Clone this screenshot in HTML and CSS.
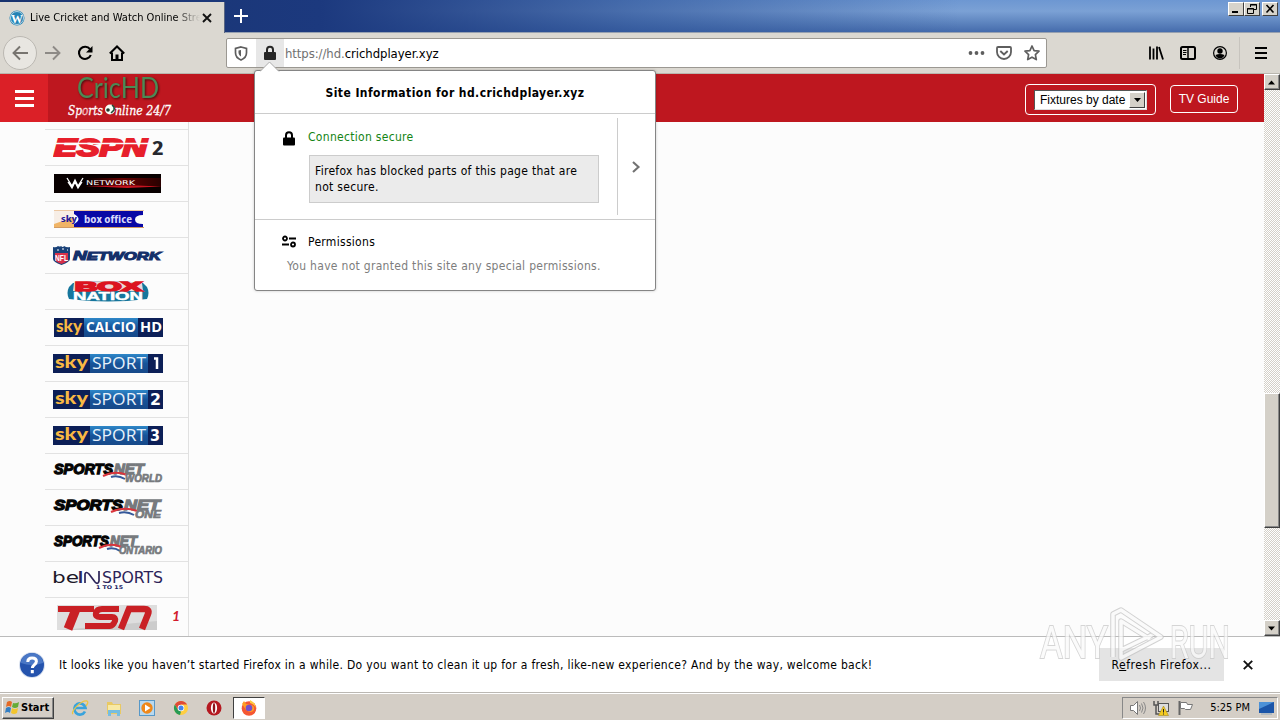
FILE: index.html
```
<!DOCTYPE html>
<html lang="en">
<head>
  <meta charset="UTF-8">
  <title>Live Cricket and Watch Online Streaming</title>
  <link rel="stylesheet" href="styles.css">
</head>
<body>

<div class="tabs">
  <div class="tab">
    <svg class="tab-icon" width="16" height="16" viewBox="0 0 16 16"><circle cx="8" cy="8" r="7.5" fill="#2483b5"/><circle cx="8" cy="8" r="6.5" fill="none" stroke="#d8e8ee" stroke-width=".8"/><text x="2" y="13" font-family="Liberation Serif" font-weight="bold" font-size="13" fill="#fff" textLength="12" lengthAdjust="spacingAndGlyphs">W</text></svg>
    <span class="tab-title">Live Cricket and Watch Online Stre</span>
    <svg class="tab-close" width="10" height="10" viewBox="0 0 10 10"><path d="M1 1l8 8M9 1L1 9" stroke="#111" stroke-width="1.9"/></svg>
  </div>
  <svg class="new-tab" width="14" height="14" viewBox="0 0 14 14"><path d="M7 0v14M0 7h14" stroke="#fff" stroke-width="2"/></svg>
  <div class="win-buttons">
    <span class="win-btn"><svg width="14" height="12"><path d="M3 9h6" stroke="#000" stroke-width="2"/></svg></span>
    <span class="win-btn"><svg width="14" height="12"><path d="M5.500 4V1.500h6v5H9M5 2h7M2.500 5.500h6v5h-6zM2 6h7" fill="none" stroke="#000"/></svg></span>
    <span class="win-btn close"><svg width="14" height="12"><path d="M3.500 2l7 7.500M10.500 2l-7 7.500" stroke="#000" stroke-width="1.600"/></svg></span>
  </div>
</div>

<div class="toolbar">
  <span class="back"><svg width="16" height="16" viewBox="0 0 16 16"><path d="M16 8H1.500M8 1.500L1.500 8 8 14.500" fill="none" stroke="#77746f" stroke-width="1.900"/></svg></span>
  <svg class="forward" width="16" height="16" viewBox="0 0 16 16"><path d="M0 8h14.500M8 1.500L14.500 8 8 14.500" fill="none" stroke="#8d8a86" stroke-width="1.900"/></svg>
  <svg class="reload" width="16" height="16" viewBox="0 0 16 16"><path d="M13 4.200A6.100 6.100 0 1 0 13.800 10" fill="none" stroke="#000" stroke-width="2.100"/><path d="M15.500 1v6.500H9z" fill="#000"/></svg>
  <svg class="home" width="16" height="16" viewBox="0 0 16 16"><path d="M.8 8.500L8 1.500l7.200 7" fill="none" stroke="#000" stroke-width="2"/><path d="M3 7.500V15h10V7.500" fill="none" stroke="#000" stroke-width="2"/><path d="M6.500 14V9.500h3V14z" fill="#000"/></svg>
  <div class="urlbar">
    <svg class="shield" width="14" height="15" viewBox="0 0 14 15"><path d="M7 1l5.500 1.500v4.300c0 3.500-2.500 6-5.500 7.200-3-1.200-5.500-3.700-5.500-7.200V2.500z" fill="none" stroke="#5e5e5e" stroke-width="1.700"/><path d="M7 4v6.500C5.300 9.500 4.500 8 4.500 6.500V4.600z" fill="#5e5e5e"/></svg>
    <span class="identity"><svg width="14" height="16" viewBox="0 0 14 16"><path d="M4 8V4.800a3 3 0 0 1 6 0V8" fill="none" stroke="#262626" stroke-width="2"/><rect x="1" y="7" width="12" height="8" rx="1" fill="#262626"/></svg></span>
    <span class="url">https://hd.<b>crichdplayer.xyz</b></span>
    <svg class="dots" width="17" height="6"><circle cx="2.500" cy="3" r="1.900" fill="#5e5e5e"/><circle cx="8.500" cy="3" r="1.900" fill="#5e5e5e"/><circle cx="14.500" cy="3" r="1.900" fill="#5e5e5e"/></svg>
    <svg class="pocket" width="16" height="16" viewBox="0 0 16 16"><path d="M2 2h12a1 1 0 0 1 1 1v4a7 7 0 0 1-14 0V3a1 1 0 0 1 1-1z" fill="none" stroke="#5e5e5e" stroke-width="1.800"/><path d="M4.300 6L8 9.500 11.700 6" fill="none" stroke="#5e5e5e" stroke-width="1.900"/></svg>
    <svg class="star" width="16" height="16" viewBox="0 0 16 16"><path d="M8 1l2.100 4.600 4.900.6-3.600 3.400.9 5L8 12.200l-4.300 2.400.9-5L1 6.200l4.900-.6z" fill="none" stroke="#5e5e5e" stroke-width="1.700" stroke-linejoin="round"/></svg>
  </div>
  <div class="tools">
    <svg width="16" height="16" viewBox="0 0 16 16"><path d="M2 1.500v13M5.500 3.500v11M9 1.500v13M11 2l4 12.500" fill="none" stroke="#000" stroke-width="1.800"/></svg>
    <svg width="16" height="16" viewBox="0 0 16 16"><rect x="1" y="2" width="14" height="12" rx="1.500" fill="none" stroke="#000" stroke-width="2"/><path d="M8 2v12" stroke="#000" stroke-width="1.500"/><path d="M3 5.500h3.500M3 7.500h3.500M3 9.500h3" stroke="#000"/></svg>
    <svg width="16" height="16" viewBox="0 0 16 16"><circle cx="8" cy="8" r="6.400" fill="none" stroke="#000" stroke-width="1.200"/><circle cx="8" cy="6" r="2.700" fill="#000"/><path d="M3.500 10q4.500-2 9 0-1.300 3.300-4.500 3.400Q4.800 13.300 3.500 10z" fill="#000"/></svg>
    <span class="divider"></span>
    <svg width="12" height="14"><path d="M0 2h12M0 7h12M0 12h12" stroke="#000" stroke-width="2"/></svg>
  </div>
</div>

<div class="content">
  <div class="page">
    <div class="header">
      <div class="menu"><svg width="19" height="17"><path d="M0 1.500h19M0 8.500h19M0 15.500h19" stroke="#fff" stroke-width="3"/></svg></div>
      <svg class="logo" width="120" height="46" viewBox="0 0 120 46">
        <text x="19" y="24" font-family="Lato" font-size="28" fill="#4c8a55" textLength="82" lengthAdjust="spacingAndGlyphs">CricHD</text>
        <g class="tagline"><text x="10" y="41" textLength="35" lengthAdjust="spacingAndGlyphs">Sp<tspan fill="#e98590">o</tspan>rts</text><text x="57" y="41" textLength="56" lengthAdjust="spacingAndGlyphs">nline 24/7</text></g>
        <circle cx="52" cy="35.500" r="5" fill="#f5fff7"/><circle cx="50" cy="36" r="1.800" fill="#213b2a"/><path d="M54 31q3 2 2 5l-3 3" fill="none" stroke="#1b4a37" stroke-width="1.500"/>
      </svg>
      <div class="header-right">
        <div class="fixtures"><div class="select"><span>Fixtures by date</span><i><svg width="9" height="5"><path d="M1 0h7L4.500 4z"/></svg></i></div></div>
        <div class="guide">TV Guide</div>
      </div>
    </div>
    <div class="sidebar">
      <div class="channel"><svg width="120" height="30">
        <text x="1" y="23" font-family="Liberation Sans" font-weight="bold" font-style="italic" font-size="24" fill="#e71f2b" stroke="#e71f2b" stroke-width="2" textLength="93" lengthAdjust="spacingAndGlyphs">ESPN</text><path d="M3 10.500h93" stroke="#fcfcfc" stroke-width="1.300"/>
        <text x="99" y="22" font-family="Open Sans" font-weight="bold" font-size="19" fill="#26282e" textLength="12" lengthAdjust="spacingAndGlyphs">2</text>
      </svg></div>
      <div class="channel"><svg width="120" height="30">
        <defs><linearGradient id="wwe" x2="1"><stop stop-color="#000"/><stop offset=".5" stop-color="#600"/><stop offset="1" stop-color="#280000"/></linearGradient></defs>
        <rect x="1" y="5" width="107" height="19" fill="#080000"/><path d="M30 9h78v9H36z" fill="url(#wwe)"/><path d="M32 17l52-.5 24 1-34 1.500z" fill="#c61320"/>
        <path d="M14 9l5 8 3-6 3 6 5-8M15 13l4 6 3-6 3 6 4-6" fill="none" stroke="#fff" stroke-width="1.300"/>
        <text x="33" y="16" font-family="DejaVu Sans" font-size="6.500" fill="#fff" textLength="49" lengthAdjust="spacingAndGlyphs">NETWORK</text>
      </svg></div>
      <div class="channel"><svg width="120" height="30">
        <path d="M1 5h20v18H1z" fill="#f7eee6"/><path d="M1 23V19l20-7v11z" fill="#f0b466"/><path d="M1 5h90v1H1z" fill="#ecc8a3"/>
        <path d="M21 6h69v4q-8 0-8 4.500t8 4.500v3H21v-3q9-5 0-10z" fill="#0908a5"/>
        <text x="8" y="17" font-family="Open Sans" font-weight="bold" font-size="9" fill="#26209c" textLength="16" lengthAdjust="spacingAndGlyphs">sky</text>
        <text x="31" y="18" font-family="Open Sans" font-weight="bold" font-size="11" fill="#d6d7fa" textLength="48" lengthAdjust="spacingAndGlyphs">box office</text>
        <path d="M1 22.500h90" stroke="#d29b63"/>
      </svg></div>
      <div class="channel"><svg width="120" height="30">
        <path d="M0 6q3 1 5-1 2 1 3 0 2 2 3 0 3 2 6 1v12q0 3-8.500 6Q0 21 0 18z" fill="#194178"/><path d="M2 12h13v7q-1 2-6.500 4Q3 21 2 19z" fill="#d8304b"/>
        <text x="2" y="20" font-family="Liberation Sans" font-weight="bold" font-size="9" fill="#fff" textLength="13" lengthAdjust="spacingAndGlyphs">NFL</text><path d="M4 9h2m3-1h2m3 1h1" stroke="#fff"/>
        <text x="20" y="19" font-family="Liberation Sans" font-weight="bold" font-style="italic" font-size="12" fill="#14306a" stroke="#14306a" stroke-width="1" textLength="88" lengthAdjust="spacingAndGlyphs">N<tspan font-size="10.500">ETWORK</tspan></text>
      </svg></div>
      <div class="channel"><svg width="120" height="30">
        <path d="M20 6q35-4 70 0l4 4q3 6 0 12-39 5-78 0-3-6 0-12z" fill="#16769c"/><path d="M21 6q34-4 68 0l1 8H20z" fill="#ead8da"/>
        <text x="22" y="14" font-family="Liberation Sans" font-weight="bold" font-size="12" fill="#dc1420" stroke="#dc1420" stroke-width="1.500" textLength="67" lengthAdjust="spacingAndGlyphs">BOX</text>
        <text x="20" y="23" font-family="Liberation Sans" font-weight="bold" font-size="10" fill="#fff" stroke="#fff" stroke-width=".4" textLength="70" lengthAdjust="spacingAndGlyphs">NATION</text>
      </svg></div>
      <div class="channel"><svg class="sky" width="120" height="30">
        <defs><linearGradient id="blue" x2="0" y2="1"><stop stop-color="#2e87c8"/><stop offset=".5" stop-color="#17549a"/><stop offset="1" stop-color="#174989"/></linearGradient></defs>
        <rect x="1" y="5" width="109" height="19" fill="#0c1f57"/><rect x="31" y="5" width="54" height="19" fill="url(#blue)"/>
        <text class="sky-name" x="3" y="19" textLength="26" lengthAdjust="spacingAndGlyphs">sky</text><text class="sky-label" x="33" y="19" textLength="50" lengthAdjust="spacingAndGlyphs">CALCIO</text><text class="sky-label" x="87" y="19" textLength="22" lengthAdjust="spacingAndGlyphs">HD</text>
      </svg></div>
      <div class="channel"><svg class="sky" width="120" height="30">
        <rect x="0" y="5" width="110" height="19" fill="#0c1f57"/><rect x="37" y="5" width="58" height="19" fill="url(#blue)"/>
        <text class="sky-name" x="2" y="19" textLength="33" lengthAdjust="spacingAndGlyphs">sky</text><text class="sky-thin" x="39" y="20" textLength="54" lengthAdjust="spacingAndGlyphs">SPORT</text><path d="M101 9.500h3V20" fill="none" stroke="#fff" stroke-width="2.500"/>
      </svg></div>
      <div class="channel"><svg class="sky" width="120" height="30">
        <rect x="0" y="5" width="110" height="19" fill="#0c1f57"/><rect x="37" y="5" width="58" height="19" fill="url(#blue)"/>
        <text class="sky-name" x="2" y="19" textLength="33" lengthAdjust="spacingAndGlyphs">sky</text><text class="sky-thin" x="39" y="20" textLength="54" lengthAdjust="spacingAndGlyphs">SPORT</text><text class="sky-num" x="97" y="20" textLength="11" lengthAdjust="spacingAndGlyphs">2</text>
      </svg></div>
      <div class="channel"><svg class="sky" width="120" height="30">
        <rect x="0" y="5" width="110" height="19" fill="#0c1f57"/><rect x="37" y="5" width="58" height="19" fill="url(#blue)"/>
        <text class="sky-name" x="2" y="19" textLength="33" lengthAdjust="spacingAndGlyphs">sky</text><text class="sky-thin" x="39" y="20" textLength="54" lengthAdjust="spacingAndGlyphs">SPORT</text><text class="sky-num" x="97" y="20" textLength="10" lengthAdjust="spacingAndGlyphs">3</text>
      </svg></div>
      <div class="channel"><svg class="sn" width="120" height="30">
        <text class="sn-a" x="1" y="17" textLength="59" lengthAdjust="spacingAndGlyphs">SPORTS</text><text class="sn-b" x="61" y="17" textLength="30" lengthAdjust="spacingAndGlyphs">NET</text>
        <path d="M50 19q12-6 24-1" fill="none" stroke="#d9353c" stroke-width="2"/><path d="M58 20q7-2 14 2" fill="none" stroke="#35589a" stroke-width="2"/>
        <text class="sn-c" x="72" y="24.500" textLength="37" lengthAdjust="spacingAndGlyphs">WORLD</text>
      </svg></div>
      <div class="channel"><svg class="sn" width="120" height="30">
        <text class="sn-a" x="1" y="17" textLength="69" lengthAdjust="spacingAndGlyphs">SPORTS</text><text class="sn-b" x="71" y="17" textLength="36" lengthAdjust="spacingAndGlyphs">NET</text>
        <path d="M58 19q13-6 26-1" fill="none" stroke="#d9353c" stroke-width="2"/><path d="M66 20q8-2 15 2" fill="none" stroke="#35589a" stroke-width="2"/>
        <text class="sn-c" x="82" y="24.500" textLength="26" lengthAdjust="spacingAndGlyphs">ONE</text>
      </svg></div>
      <div class="channel"><svg class="sn" width="120" height="30">
        <text class="sn-a" x="1" y="17" textLength="55" lengthAdjust="spacingAndGlyphs">SPORTS</text><text class="sn-b" x="57" y="17" textLength="27" lengthAdjust="spacingAndGlyphs">NET</text>
        <path d="M46 19q12-6 22-1" fill="none" stroke="#d9353c" stroke-width="2"/><path d="M54 20q7-2 13 2" fill="none" stroke="#35589a" stroke-width="2"/>
        <text class="sn-c" x="66" y="24.500" textLength="43" lengthAdjust="spacingAndGlyphs">ONTARIO</text>
      </svg></div>
      <div class="channel"><svg width="120" height="30">
        <g font-family="DejaVu Sans" font-size="15" fill="#2b2358"><text x="-1" y="18" fill="#1c1828" textLength="27" lengthAdjust="spacingAndGlyphs">be</text><text x="25" y="18" textLength="5" font-weight="bold" lengthAdjust="spacingAndGlyphs">I</text><text x="49" y="18" textLength="61" lengthAdjust="spacingAndGlyphs">SPORTS</text></g>
        <path d="M32 18V9q1-3 4 0l6 8q3 3 4-1V6" fill="none" stroke="#2b2358" stroke-width="1.700"/>
        <text x="43" y="24" font-family="DejaVu Sans" font-weight="bold" font-size="5" fill="#221d63" textLength="27" lengthAdjust="spacingAndGlyphs">1 TO 15</text>
      </svg></div>
      <div class="channel"><svg width="130" height="30">
        <path d="M4 4h100v25H4z" fill="#dedede"/><path d="M8 29l96-9v9z" fill="#cccccc"/>
        <g fill="none" stroke="#c92025"><path d="M5 8h36" stroke-width="6"/><path d="M23 8l-8 20" stroke-width="9"/><path d="M66 8H49q-5 0-6 4-1 4 4 4h12q4 0 3 4-2 5-5 5H32" stroke-width="6"/><path d="M68 28l8-20h15q6 0 4 5l-6 15" stroke-width="6.500"/></g>
        <text x="119" y="20" font-family="Lato" font-style="italic" font-weight="bold" font-size="14" fill="#d21b2d">1</text>
      </svg></div>
    </div>
  </div>
  <div class="scrollbar">
    <span class="scroll-btn"><svg width="8" height="5"><path d="M0 4.500h7L3.500.5z"/></svg></span>
    <span class="thumb"></span>
    <span class="scroll-btn bottom"><svg width="8" height="5"><path d="M0 .5h7L3.500 4.500z"/></svg></span>
  </div>
</div>

<div class="notice">
  <svg class="help" width="28" height="28" viewBox="0 0 28 28"><circle cx="14" cy="14" r="13" fill="#d6dfee"/><circle cx="14" cy="14" r="12" fill="#2453ad"/><path d="M3 12a11 10 0 0 1 22 0q-11 4-22 0z" fill="#4a78c6"/><path d="M9.800 11q0-4 4.300-4t4.300 3.600c0 3-4 3-4 6.400M14.300 19v3.200" fill="none" stroke="#fff" stroke-width="3"/></svg>
  <span class="notice-text">It looks like you haven’t started Firefox in a while. Do you want to clean it up for a fresh, like-new experience? And by the way, welcome back!</span>
  <span class="refresh">R<u>e</u>fresh Firefox...</span>
  <svg class="notice-close" width="10" height="10"><path d="M.8.8l8.400 8.400M9.200.8L.8 9.200" stroke="#111" stroke-width="1.900"/></svg>
</div>

<div class="taskbar">
  <div class="start"><svg width="16" height="16" viewBox="0 0 16 16"><path d="M3 2q3-2 5 0L7 7Q5 5 2 7z" fill="#e56a26"/><path d="M9 3q3 1 6-1l-1 5q-3 2-6 0z" fill="#65ab35"/><path d="M2 8q3-2 5 0l-1 5q-2-2-5 0z" fill="#347fc4"/><path d="M8 8q3 2 6 0l-1 5q-3 2-6 0z" fill="#f3c52d"/></svg><span>Start</span></div>
  <div class="quick">
    <svg width="18" height="18" viewBox="0 0 18 18"><path d="M14 12.500A5.600 5.600 0 1 1 14.500 9H5" fill="none" stroke="#39a3dc" stroke-width="2.700"/><path d="M2 15C-1 13 10 1 16 2q2 1-1 5" fill="none" stroke="#ebc542" stroke-width="1.300"/></svg>
    <svg width="18" height="18" viewBox="0 0 18 18"><path d="M2 3h5l1 2h8v10H2z" fill="#e9c963"/><path d="M3 6h12v5H3z" fill="#f8e9a5"/><path d="M3 17v-6h12v6h-3v-3H6v3z" fill="#76bde0"/></svg>
    <svg width="18" height="18" viewBox="0 0 18 18"><rect x="1.500" y="1.500" width="15" height="15" fill="#b9d9ef" stroke="#5798c8"/><circle cx="9" cy="9" r="5.700" fill="#ef881a"/><path d="M7 5.500l5.500 3.500L7 12.500z" fill="#fff"/></svg>
    <svg width="18" height="18" viewBox="0 0 18 18"><circle cx="9" cy="9" r="7" fill="#ffce41"/><path d="M2.900 5.500A7 7 0 0 1 15.100 5.500H9L6 11z" fill="#df4a38"/><path d="M2.900 5.500L6 11l3 1.500L8 16A7 7 0 0 1 2.900 5.500z" fill="#279b55"/><circle cx="9" cy="9" r="3.300" fill="#fff"/><circle cx="9" cy="9" r="2.500" fill="#4384ec"/></svg>
    <svg width="18" height="18" viewBox="0 0 18 18"><circle cx="9" cy="9" r="7.500" fill="#b51920"/><ellipse cx="9" cy="9" rx="3.100" ry="5.500" fill="#fff"/><ellipse cx="9" cy="9" rx="1.200" ry="5" fill="#8f1218"/></svg>
  </div>
  <div class="task-active"><svg width="18" height="18" viewBox="0 0 18 18"><circle cx="9" cy="9.500" r="7.300" fill="#f55733"/><path d="M10 1q6 3 6 8-2-4-6-5z" fill="#ffcb3d"/><path d="M2 5l2-3 2 3 4 1q5 0 4 5-3 4-8 0z" fill="#ff9e24"/><circle cx="9" cy="9" r="3.300" fill="#7350cc"/></svg></div>
  <div class="tray">
    <svg width="17" height="16" viewBox="0 0 17 16"><path d="M1.500 5.500h3l4-4v13l-4-4h-3z" fill="#fff" stroke="#777"/><path d="M10.500 5q2 3 0 6M12.500 3.500q3 4.500 0 9M14.500 2q4 6 0 12" fill="none" stroke="#888"/></svg>
    <svg width="17" height="16" viewBox="0 0 17 16"><rect x="5.500" y="3.500" width="10" height="8" fill="#ddd" stroke="#555"/><path d="M1 1v4h4V1M3 5v9h3" fill="none" stroke="#555" stroke-width="1.500"/><path d="M10.500 6l5 9.500h-10z" fill="#f5cb21" stroke="#997d10" stroke-width=".5"/><path d="M10.500 9v3.500m0 1v1" stroke="#222"/></svg>
    <svg width="17" height="16" viewBox="0 0 17 16"><path d="M2.500 1v14" stroke="#666" stroke-width="2"/><path d="M3.500 2.500h6l1 2h5l-2 5h-5l-1-1h-4z" fill="#fff" stroke="#777"/></svg>
    <span class="clock">5:25 PM</span>
    <svg width="17" height="16" viewBox="0 0 17 16"><path d="M1 2h15v11H1z" fill="#1b55a8"/><path d="M1 2h15L1 9z" fill="#4c91d7"/><path d="M3 14h11" stroke="#8fa6ba"/></svg>
  </div>
</div>

<!-- site information panel -->
<div class="popup">
  <svg class="arrow" width="20" height="11"><path d="M0 10.500L9.500 1 19 10.500" fill="#fff" stroke="#aaa"/><path d="M1 10.500h17" stroke="#fff"/></svg>
  <div class="popup-title">Site Information for hd.crichdplayer.xyz</div>
  <div class="popup-security">
    <svg class="lock" width="12" height="15" viewBox="0 0 12 15"><path d="M3 7V4.200a3 3 0 0 1 6 0V7" fill="none" stroke="#000" stroke-width="2"/><rect y="6.500" width="12" height="8" rx="1"/></svg>
    <div class="security-body">
      <span class="secure">Connection secure</span>
      <div class="blocked">Firefox has blocked parts of this page that are<br><span>not secure.</span></div>
    </div>
    <div class="more"><svg width="9" height="12"><path d="M1 1l5.500 5L1 11" fill="none" stroke="#727272" stroke-width="2.100"/></svg></div>
  </div>
  <div class="popup-permissions">
    <div class="perm-title"><svg width="15" height="14"><circle cx="3" cy="3.500" r="2" fill="none" stroke="#000" stroke-width="1.800"/><path d="M7 3.500h7M0 9.500h7" stroke="#000" stroke-width="2"/><circle cx="11" cy="9.500" r="2" fill="none" stroke="#000" stroke-width="1.800"/></svg><span>Permissions</span></div>
    <span class="perm-text">You have not granted this site any special permissions.</span>
  </div>
</div>

<svg class="watermark" width="196" height="58" viewBox="0 0 196 58">
  <g class="mark-text"><text x="2" y="51" textLength="68" lengthAdjust="spacingAndGlyphs">ANY</text><text x="132" y="51" textLength="60" lengthAdjust="spacingAndGlyphs">RUN</text></g>
  <g fill="none" stroke-linejoin="round"><path d="M75 50V7l8-4 40 27-40 21V14l29 18M83 43l31-15" stroke="#c4c4c4" stroke-width="5.500"/><path d="M75 50V7l8-4 40 27-40 21V14l29 18M83 43l31-15" stroke="#fafafa" stroke-width="3.500"/></g>
</svg>

</body>
</html>
```
FILE: styles.css
```
* {
  box-sizing: border-box;
}
body {
  margin: 0;
  width: 1280px;
  height: 720px;
  display: flex;
  flex-direction: column;
  overflow: hidden;
  font-family: "DejaVu Sans Condensed", "DejaVu Sans", sans-serif;
  font-stretch: condensed;
  font-size: 12px;
  color: #000;
  background: #fff;
}
svg {
  display: block;
  flex: none;
}
span {
  white-space: nowrap;
}

/* tabs */
.tabs {
  height: 33px;
  flex: none;
  display: flex;
  align-items: flex-start;
  border-bottom: 1px solid #96a0b0;
  background: linear-gradient(90deg, #18336f 0, #1c397e 25%, rgba(42,79,148,.6) 50%, rgba(100,145,205,0) 75%), linear-gradient(#6d97d2, #7ba1d5 35%, #456cac);
}
.tab {
  width: 225px;
  height: 31px;
  margin-top: 2px;
  padding: 0 12px 0 9px;
  display: flex;
  align-items: center;
  background: #dbd8d1;
  border-right: 1px solid #596681;
}
.tab-title {
  width: 170px;
  margin-left: 5px;
  font-size: 11px;
  mask-image: linear-gradient(90deg, #000 85%, transparent);
}
.tab-close {
  margin-left: 2px;
}
.new-tab {
  margin: 9px 0 0 9px;
}
.win-buttons {
  display: flex;
  margin: 2px 2px 0 auto;
}
.win-btn {
  width: 16px;
  height: 14px;
  background: #d6d3cb;
  border: 1px solid;
  border-color: #fff #404040 #404040 #fff;
}
.win-btn.close {
  margin-left: 2px;
}

/* toolbar */
.toolbar {
  height: 41px;
  flex: none;
  display: flex;
  align-items: center;
  background: #dbd8d1;
  border-bottom: 1px solid #b9b6ae;
}
.back {
  width: 34px;
  height: 34px;
  margin-left: 3px;
  display: flex;
  align-items: center;
  justify-content: center;
  border: 1px solid #bbb8b2;
  border-radius: 50%;
  background: #e8e6e1;
}
.forward {
  margin-left: 8px;
}
.reload, .home {
  margin-left: 16px;
}
.urlbar {
  width: 821px;
  height: 30px;
  margin-left: 101px;
  display: flex;
  align-items: center;
  background: #fff;
  border: 1px solid #9b9892;
  border-radius: 2px;
}
.shield {
  margin-left: 7px;
}
.identity {
  width: 28px;
  height: 28px;
  margin-left: 8px;
  display: flex;
  align-items: center;
  justify-content: center;
  background: #e7e7e7;
}
.url {
  margin-left: 1px;
  color: #707070;
  font-size: 13px;
  letter-spacing: -.07px;
}
.url b {
  font-weight: normal;
  color: #000;
}
.dots {
  margin-left: auto;
}
.pocket {
  margin-left: 11px;
}
.star {
  margin: 0 6px 0 12px;
}
.tools {
  display: flex;
  align-items: center;
  gap: 16px;
  margin: 0 13px 0 auto;
}
.divider {
  width: 1px;
  height: 32px;
  margin: 0 -1px 0 -5px;
  background: #c7c4be;
}

/* page */
.content {
  flex: 1;
  min-height: 0;
  display: flex;
}
.page {
  flex: 1;
  display: flex;
  flex-direction: column;
  background: #fcfcfc;
}
.header {
  height: 48px;
  flex: none;
  display: flex;
  background: #be171f;
}
.menu {
  width: 48px;
  display: flex;
  align-items: center;
  justify-content: center;
  background: #db2027;
}
.logo {
  margin-left: 10px;
  overflow: visible;
}
.logo > text {
  filter: drop-shadow(1px 1px 1px rgba(40,10,10,.8));
}
.tagline {
  font: italic 13px "DejaVu Serif", serif;
  fill: #fff;
  stroke: #fff;
  stroke-width: .3px;
}
.header-right {
  margin: 10px 26px 0 auto;
  display: flex;
  gap: 14px;
  font-family: "Liberation Sans", Arial, sans-serif;
}
.fixtures {
  width: 131px;
  height: 31px;
  padding: 5px 8px 0;
  border: 1px solid #fff;
  border-radius: 4px;
}
.select {
  height: 20px;
  display: flex;
  align-items: center;
  justify-content: space-between;
  padding-left: 5px;
  background: #fff;
  border: 1px solid;
  border-color: #555 #ddd #ddd #555;
}
.select i {
  width: 16px;
  height: 16px;
  margin-right: 1px;
  padding: 5px 0 0 3px;
  background: #d4d0c8;
  border: 1px solid;
  border-color: #fff #404040 #404040 #fff;
}
.guide {
  width: 68px;
  height: 28px;
  margin-top: 1px;
  line-height: 26px;
  text-align: center;
  color: #fff;
  border: 1px solid #fff;
  border-radius: 4px;
}
.sidebar {
  width: 144px;
  flex: 1;
  min-height: 0;
  margin-left: 45px;
  padding-top: 7px;
  overflow: hidden;
  border-right: 1px solid #e0e0e0;
}
.channel {
  height: 36px;
  padding: 3px 0 0 8px;
  border-top: 1px solid #e2e2e2;
}
.sky-name {
  font: 900 17px Lato, sans-serif;
  fill: #f8b843;
}
.sky-label {
  font: bold 15px "Open Sans", sans-serif;
  fill: #fff;
}
.sky-num {
  font: bold 16px "DejaVu Sans", sans-serif;
  fill: #fff;
}
.sky-thin {
  font: 16px "Open Sans", sans-serif;
  fill: #e7f1fb;
}
.sn text {
  font: italic bold 15px "Liberation Sans", sans-serif;
  stroke-width: 1.3px;
}
.sn .sn-a {
  fill: #050505;
  stroke: #050505;
}
.sn .sn-b, .sn .sn-c {
  fill: #777a7e;
  stroke: #777a7e;
}
.sn .sn-c {
  font-size: 10px;
  stroke-width: .7px;
}
.scrollbar {
  width: 16px;
  display: flex;
  flex-direction: column;
  background: repeating-conic-gradient(#d4d0c8 0 25%, #fff 0 50%) 0 0 / 2px 2px;
}
.scroll-btn, .thumb {
  background: #d4d0c8;
  border: 1px solid;
  border-color: #fff #404040 #404040 #fff;
  box-shadow: inset -1px -1px #888;
}
.scroll-btn {
  height: 16px;
  padding: 5px 0 0 3px;
}
.thumb {
  height: 135px;
  margin-top: 303px;
}
.bottom {
  margin-top: auto;
}

/* notification */
.notice {
  height: 56px;
  flex: none;
  display: flex;
  align-items: center;
  border-top: 1px solid #bbb;
  background: #fff;
}
.help {
  margin-left: 18px;
}
.notice-text {
  margin-left: 13px;
  padding-top: 1px;
  letter-spacing: .305px;
}
.refresh {
  width: 125px;
  height: 33px;
  margin: 0 0 0 auto;
  line-height: 34px;
  text-align: center;
  letter-spacing: .55px;
  background: #e4e4e4;
}
.notice-close {
  margin: 0 27px 0 19px;
}

/* taskbar */
.taskbar {
  height: 28px;
  flex: none;
  display: flex;
  align-items: center;
  padding-top: 2px;
  background: #d4cec6;
  border-top: 1px solid #bbb8b3;
  box-shadow: inset 0 1px #fff;
}
.start {
  width: 52px;
  height: 22px;
  margin-left: 2px;
  padding-left: 1px;
  display: flex;
  align-items: center;
  font-weight: bold;
  font-size: 11px;
  border: 1px solid;
  border-color: #fff #404040 #404040 #fff;
  box-shadow: inset -1px -1px #888;
}
.start span {
  margin-left: 1px;
}
.quick {
  display: flex;
  gap: 15.6px;
  margin-left: 17px;
}
.task-active {
  width: 32px;
  height: 22px;
  margin-left: 9.6px;
  display: flex;
  align-items: center;
  justify-content: center;
  background: #fff;
  border: 1px solid;
  border-color: #404040 #fff #fff #404040;
}
.tray {
  width: 156px;
  height: 22px;
  margin: 0 2px 0 auto;
  padding: 0 2px 0 6px;
  display: flex;
  align-items: center;
  gap: 7px;
  border: 1px solid;
  border-color: #888 #fff #fff #888;
}
.clock {
  margin: 0 1px 0 auto;
  font-size: 11px;
}

/* popup */
.popup {
  position: absolute;
  left: 254px;
  top: 70px;
  width: 402px;
  height: 221px;
  background: #fff;
  border: 1px solid #858585;
  border-radius: 3px;
  box-shadow: 0 0 3px rgba(0,0,0,.2);
  letter-spacing: .3px;
}
.arrow {
  position: absolute;
  left: 5px;
  top: -10px;
}
.popup-title {
  height: 43px;
  line-height: 44px;
  text-align: center;
  font-weight: bold;
  letter-spacing: .43px;
  border-bottom: 1px solid #ccc;
}
.popup-security {
  height: 106px;
  display: flex;
  border-bottom: 1px solid #ccc;
}
.lock {
  margin: 17px 0 0 28px;
}
.security-body {
  width: 291px;
  margin: 15px 0 0 13px;
}
.secure {
  display: block;
  line-height: 16px;
  color: #148414;
}
.blocked {
  height: 48px;
  margin: 10px 0 0 1px;
  padding: 7px 5px;
  line-height: 16px;
  white-space: nowrap;
  background: #ebebeb;
  border: 1px solid #ccc;
}
.more {
  width: 38px;
  height: 97px;
  margin: 4px 0 0 18px;
  display: flex;
  align-items: center;
  padding-left: 14px;
  border-left: 1px solid #ccc;
}
.popup-permissions {
  padding: 14px 0 0 27px;
}
.perm-title {
  display: flex;
  align-items: center;
  height: 16px;
}
.perm-title span {
  margin-left: 11px;
}
.perm-text {
  display: block;
  margin: 8px 0 0 5px;
  line-height: 16px;
  color: #7d7d7d;
}

.watermark {
  position: absolute;
  left: 1038px;
  top: 607px;
  overflow: visible;
  opacity: .75;
}
.mark-text {
  font: 44px Roboto, sans-serif;
  fill: #fafafa;
  stroke: #c8c8c8;
  stroke-width: 2px;
  paint-order: stroke;
}
```
